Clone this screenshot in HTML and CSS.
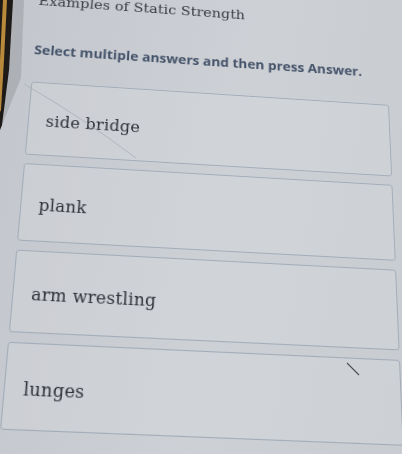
FILE: index.html
```html
<!DOCTYPE html>
<html>
<head>
<meta charset="utf-8">
<link rel="stylesheet" href="styles.css">
</head>
<body>
<div class="screen">
  <div class="content">
    <h1 class="title">Examples of Static Strength</h1>
    <p class="instruction">Select multiple answers and then press Answer.</p>
    <div class="options">
      <div class="option">side bridge</div>
      <div class="option">plank</div>
      <div class="option">arm wrestling</div>
      <div class="option">lunges</div>
    </div>
  </div>
</div>
<svg class="marks" width="402" height="454" viewBox="0 0 402 454">
  <path d="M24 84 Q 80 116 136 158" stroke="#9ea3ab" stroke-width="0.8" fill="none" opacity="0.7"/>
  <path d="M347 363 L 359 375" stroke="#4a4d52" stroke-width="1.1" fill="none"/>
</svg>
<svg class="bezel" width="30" height="140" viewBox="0 0 30 140">
  <polygon points="0,0 24,0 21,78 0,130" fill="#9a9da3" opacity="0.55"/>
  <polygon points="0,0 13,0 9,70 2,125 0,130" fill="#1e1a17"/>
  <polygon points="3,0 7,0 4,60 1,110 0,112 0,60" fill="#b98a3c"/>
</svg>
</body>
</html>
```
FILE: styles.css
```css
html, body {
  margin: 0;
  padding: 0;
}
body {
  width: 402px;
  height: 454px;
  overflow: hidden;
  background: linear-gradient(100deg, #c3c6cc 0%, #cdd0d5 55%, #c8cbd0 100%);
  position: relative;
}
.screen {
  width: 402px;
  height: 454px;
  perspective: 700px;
  perspective-origin: 150px 227px;
}
.content {
  transform: rotate(2.5deg) rotateX(14deg) rotateY(3deg);
  transform-origin: 201px 227px;
  padding: 0 0 0 22px;
  width: 376px;
}
.title {
  margin: 0;
  margin-top: -18px;
  font-family: "DejaVu Serif", serif;
  font-weight: normal;
  font-size: 15.5px;
  line-height: 18px;
  color: #3a3d44;
  padding-left: 0;
}
.instruction {
  margin: 38px 0 0 0;
  padding-left: 0;
  font-family: "Open Sans", sans-serif;
  font-weight: 700;
  font-size: 14.6px;
  line-height: 18px;
  color: #44536a;
}
.options {
  margin-top: 28px;
  display: flex;
  flex-direction: column;
  gap: 9px;
}
.option {
  height: 79px;
  box-sizing: border-box;
  border: 1.5px solid #a2acb8;
  border-radius: 3px;
  background: rgba(214, 217, 222, 0.35);
  display: flex;
  align-items: center;
  padding-left: 17px;
  padding-top: 5px;
  font-family: "DejaVu Serif", serif;
  font-size: 16.5px;
  color: #2e3138;
  letter-spacing: 0.2px;
}
.marks {
  position: absolute;
  left: 0;
  top: 0;
  pointer-events: none;
}
.bezel {
  position: absolute;
  left: 0;
  top: 0;
}
```
